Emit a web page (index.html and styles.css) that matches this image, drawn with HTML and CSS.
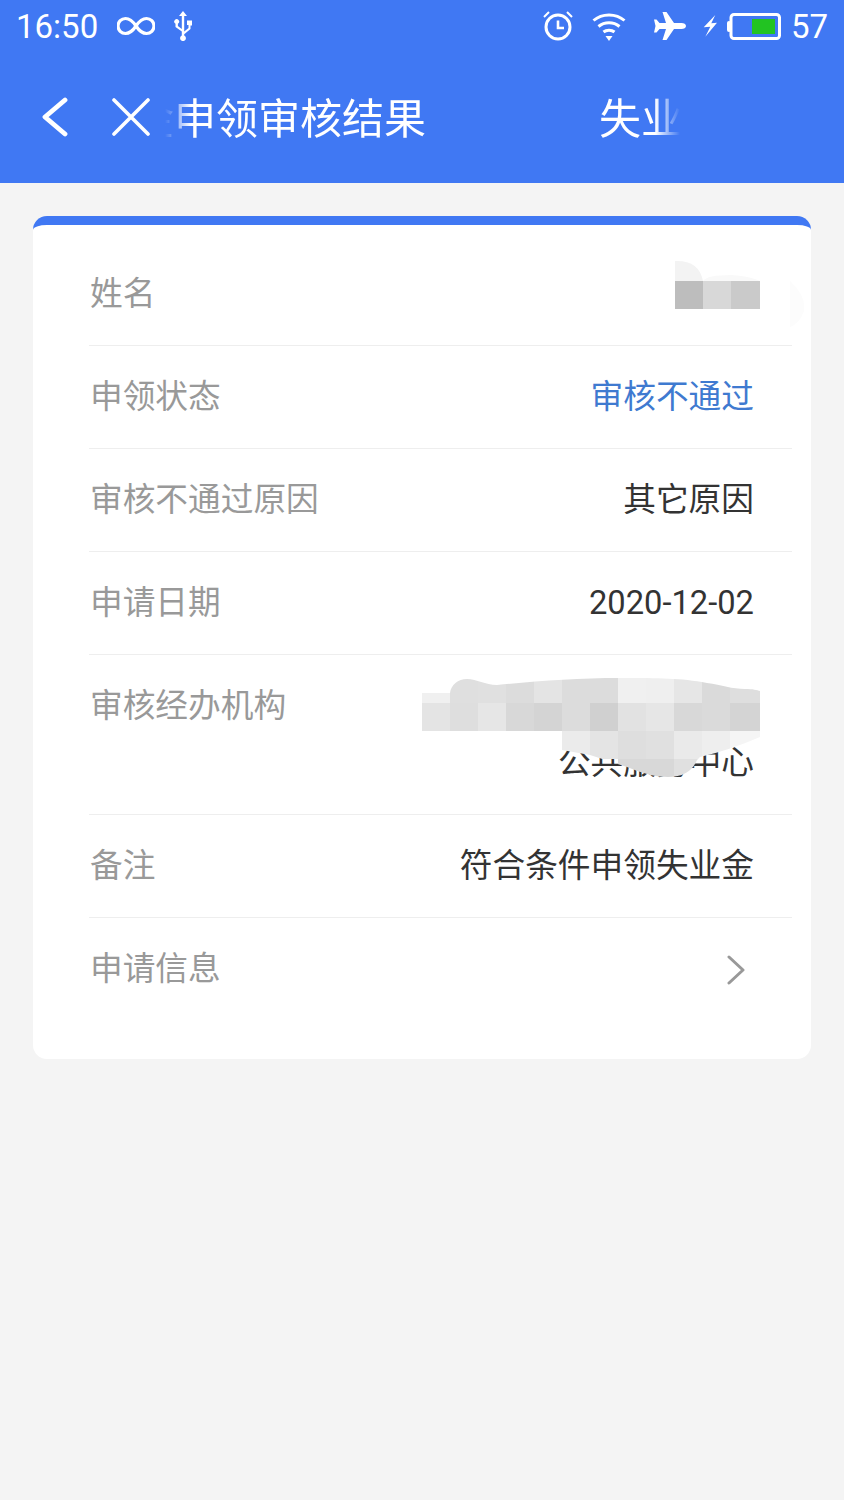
FILE: index.html
```html
<!DOCTYPE html>
<html lang="zh-CN">

<head>
    <meta charset="UTF-8">
    <meta name="viewport" content="width=device-width, initial-scale=1.0">
    <title>申领审核结果</title>
    <link rel="stylesheet" href="styles.css">
</head>

<body>
    <div class="top">
        <div class="status-bar">
            <span class="status-time">16:50</span>
            <svg class="icon-loop" viewBox="0 0 38 20" fill="none" stroke="#fff" stroke-width="3.2">
                <path d="M19 10C15 4 12 2.500 8.500 2.500a7.500 7.500 0 0 0 0 15C12 17.500 15 16 19 10c4-6 7-7.500 10.500-7.500a7.500 7.500 0 0 1 0 15C26 17.500 23 16 19 10z" />
            </svg>
            <svg class="icon-usb" viewBox="0 0 20 30" fill="#fff">
                <path d="M10 0l4 5h-2.800v15.500l4.300-3.500v-3h-1.500v-4.500h5V14.500h-1.500V18l-6.300 5.200v1.400a2.900 2.900 0 1 1-2.400 0V20.500L2.500 16v-3.300A2.400 2.400 0 1 1 4.900 12.700v2.200l3.900 3V5H6z" />
            </svg>
            <span class="status-gap"></span>
            <svg class="icon-alarm" viewBox="0 0 30 30" fill="none" stroke="#fff">
                <circle cx="15" cy="16" r="12" stroke-width="3" />
                <path d="M15 9.500V17h6" stroke-width="2.600" />
                <path d="M1 6l5-5M29 6l-5-5" stroke-width="2" />
            </svg>
            <svg class="icon-wifi" viewBox="0 0 34 29" fill="none" stroke="#fff" stroke-width="3">
                <path d="M1.500 8.500C10 1 24 1 32.500 8.500" />
                <path d="M6.500 14.500c6-5 15-5 21 0" />
                <path d="M11.500 20c3-2.500 8-2.500 11 0" />
                <path d="M13.500 24h7L17 29z" fill="#fff" stroke="none" />
            </svg>
            <svg class="icon-plane" viewBox="0 0 32 28" fill="#fff">
                <path d="M32 14c0 1.700-2 3-4.500 3H20L12.500 28H8.500L12 17H5.500L2.500 20.500H0L1.500 14 0 7.500h2.500L5.500 11H12L8.500 0h4L20 11h7.500C30 11 32 12.300 32 14z" />
            </svg>
            <svg class="icon-bolt" viewBox="0 0 15 23" fill="#fff">
                <path d="M12.300 0L.7 12.300l6.600-.6-5 10L14 7.700l-5.700.6z" />
            </svg>
            <svg class="icon-battery" viewBox="0 0 54 27" fill="none">
                <rect x="0" y="8" width="4" height="11" rx="2" fill="#fff" />
                <rect x="4" y="1.500" width="48.500" height="24" rx="3" stroke="#fff" stroke-width="3" />
                <rect x="25" y="6" width="23" height="15" fill="#22c322" />
            </svg>
            <span class="status-level">57</span>
        </div>
        <div class="nav-bar">
            <svg class="icon-back" viewBox="0 0 26 40" fill="none" stroke="#fff" stroke-width="4.800" stroke-linecap="round" stroke-linejoin="round">
                <path d="M23 3L3 20l20 17" />
            </svg>
            <svg class="icon-close" viewBox="0 0 38 38" fill="none" stroke="#fff" stroke-width="3.600" stroke-linecap="round">
                <path d="M2 2l34 34M36 2L2 36" />
            </svg>
            <div class="nav-title">
                <span class="title-run">金申领审核结果</span>
                <span class="title-next">失业金</span>
            </div>
        </div>
    </div>

    <div class="card">
        <div class="row">
            <span class="row-label">姓名</span>
            <svg class="mosaic mosaic-name" viewBox="675 255 130 80">
                <path d="M790 281q16 14 14 30q-4 12-14 16z" fill="#fcfcfc" />
                <path d="M675 261q24-1 28 20h-28z" fill="#f3f3f3" />
                <path d="M703 281q4-6 28-6q18 1 29 6z" fill="#f9f9f9" />
                <rect x="675" y="281" width="28" height="28" fill="#bdbdbd" />
                <rect x="703" y="281" width="28" height="28" fill="#d8d8d8" />
                <rect x="731" y="281" width="29" height="28" fill="#cacaca" />
            </svg>
        </div>
        <div class="row">
            <span class="row-label">申领状态</span>
            <span class="row-value is-status">审核不通过</span>
        </div>
        <div class="row">
            <span class="row-label">审核不通过原因</span>
            <span class="row-value">其它原因</span>
        </div>
        <div class="row">
            <span class="row-label">申请日期</span>
            <span class="row-value">2020-12-02</span>
        </div>
        <div class="row">
            <span class="row-label">审核经办机构</span>
            <span class="row-value">&nbsp;<br>公共服务中心</span>
            <svg class="mosaic mosaic-org" viewBox="422 675 338 110">
                <defs>
                    <clipPath id="orgShape">
                        <path d="M422 693h28c1-8 8-14 17-14c10 0 18 6 30 6c40-4 80-7 123-7c40 0 60 0 87 5c15 2 25 6 38 6c8 0 12 1 15 2V737Q730 750 700 757L697 760Q690 777 668 777Q650 777 627 767L590 755L562 750V731H422Z" />
                    </clipPath>
                </defs>
                <g clip-path="url(#orgShape)">
                    <rect x="422" y="675" width="28" height="28" fill="#f0f0f0" />
                    <rect x="450" y="675" width="28" height="28" fill="#dfdfdf" />
                    <rect x="478" y="675" width="28" height="28" fill="#e0e0e0" />
                    <rect x="506" y="675" width="28" height="28" fill="#dcdcdc" />
                    <rect x="534" y="675" width="28" height="28" fill="#e4e4e4" />
                    <rect x="562" y="675" width="28" height="28" fill="#dcdcdc" />
                    <rect x="590" y="675" width="28" height="28" fill="#dcdcdc" />
                    <rect x="618" y="675" width="28" height="28" fill="#f0f0f0" />
                    <rect x="646" y="675" width="28" height="28" fill="#efefef" />
                    <rect x="674" y="675" width="28" height="28" fill="#e6e6e6" />
                    <rect x="702" y="675" width="28" height="28" fill="#dadada" />
                    <rect x="730" y="675" width="30" height="28" fill="#dedede" />
                    <rect x="422" y="703" width="28" height="28" fill="#e4e4e4" />
                    <rect x="450" y="703" width="28" height="28" fill="#dedede" />
                    <rect x="478" y="703" width="28" height="28" fill="#e6e6e6" />
                    <rect x="506" y="703" width="28" height="28" fill="#d8d8d8" />
                    <rect x="534" y="703" width="28" height="28" fill="#d4d4d4" />
                    <rect x="562" y="703" width="28" height="28" fill="#dcdcdc" />
                    <rect x="590" y="703" width="28" height="28" fill="#d0d0d0" />
                    <rect x="618" y="703" width="28" height="28" fill="#e2e2e2" />
                    <rect x="646" y="703" width="28" height="28" fill="#e6e6e6" />
                    <rect x="674" y="703" width="28" height="28" fill="#d8d8d8" />
                    <rect x="702" y="703" width="28" height="28" fill="#dadada" />
                    <rect x="730" y="703" width="30" height="28" fill="#d4d4d4" />
                    <rect x="562" y="731" width="28" height="28" fill="#ebebeb" />
                    <rect x="590" y="731" width="28" height="28" fill="#e4e4e4" />
                    <rect x="618" y="731" width="28" height="28" fill="#dedede" />
                    <rect x="646" y="731" width="28" height="28" fill="#e0e0e0" />
                    <rect x="674" y="731" width="28" height="28" fill="#eaeaea" />
                    <rect x="702" y="731" width="28" height="28" fill="#eeeeee" />
                    <rect x="730" y="731" width="30" height="28" fill="#f5f5f5" />
                    <rect x="618" y="759" width="28" height="26" fill="#d8d8d8" />
                    <rect x="646" y="759" width="28" height="26" fill="#d8d8d8" />
                    <rect x="674" y="759" width="28" height="26" fill="#e0e0e0" />
                </g>
            </svg>
        </div>
        <div class="row">
            <span class="row-label">备注</span>
            <span class="row-value">符合条件申领失业金</span>
        </div>
        <div class="row row-last">
            <span class="row-label">申请信息</span>
            <svg class="icon-more" viewBox="0 0 18 30" fill="none" stroke="#999" stroke-width="3" stroke-linecap="round" stroke-linejoin="round">
                <path d="M2 2l14 13L2 28" />
            </svg>
        </div>
    </div>
</body>

</html>
```

FILE: styles.css
```css
body {
    font-family: Roboto, "Noto Sans CJK SC", sans-serif;
    background-color: #f4f4f4;
    margin: 0;
}

.top {
    height: 183px;
    background-color: #4078f3;
    color: #fff;
}

.status-bar {
    display: flex;
    align-items: center;
    height: 52px;
    padding: 0 16px;
    font-size: 33px;
}

.status-time {
    width: 101px;
}

.status-gap {
    flex: 1;
}

.icon-loop {
    width: 38px;
    height: 20px;
}

.icon-usb {
    width: 20px;
    height: 30px;
    margin-left: 18px;
}

.icon-alarm {
    width: 30px;
    height: 30px;
}

.icon-wifi {
    width: 34px;
    height: 29px;
    margin-left: 19px;
}

.icon-plane {
    width: 32px;
    height: 28px;
    margin-left: 28px;
}

.icon-bolt {
    width: 15px;
    height: 23px;
    margin-left: 17px;
}

.icon-battery {
    width: 54px;
    height: 27px;
    margin-left: 9px;
}

.status-level {
    margin-left: 10px;
}

.nav-bar {
    display: flex;
    align-items: center;
    height: 129px;
    padding-left: 42px;
}

.icon-back {
    width: 26px;
    height: 40px;
}

.icon-close {
    width: 38px;
    height: 38px;
    margin-left: 44px;
}

.nav-title {
    display: flex;
    width: 515px;
    margin-left: 15px;
    margin-bottom: 2px;
    overflow: hidden;
    font-size: 42px;
    white-space: nowrap;
    -webkit-mask-image: linear-gradient(to right, transparent 0, #000 26px, #000 490px, transparent 515px);
    mask-image: linear-gradient(to right, transparent 0, #000 26px, #000 490px, transparent 515px);
}

.title-run {
    margin-left: -33px;
}

.title-next {
    margin-left: 173px;
}

.card {
    margin: 33px 33px 0;
    padding: 18px 19px 39px 56px;
    background-color: #fff;
    border-top: 9px solid #4078f3;
    border-radius: 14px;
}

.row {
    position: relative;
    display: flex;
    justify-content: space-between;
    padding: 23px 38px 22px 1px;
    border-bottom: 1px solid #eeeeee;
    font-size: 32.700px;
    line-height: 57px;
}

.row-last {
    border-bottom: none;
    align-items: center;
}

.row-label {
    color: #999;
}

.row-value {
    color: #333;
    text-align: right;
}

.row-value.is-status {
    color: #3f7ad0;
}

.mosaic {
    position: absolute;
}

.mosaic-name {
    top: 12px;
    right: -13px;
    width: 130px;
    height: 80px;
}

.mosaic-org {
    top: 20px;
    right: 32px;
    width: 338px;
    height: 110px;
}

.icon-more {
    width: 18px;
    height: 30px;
    margin-right: 9px;
}
```
